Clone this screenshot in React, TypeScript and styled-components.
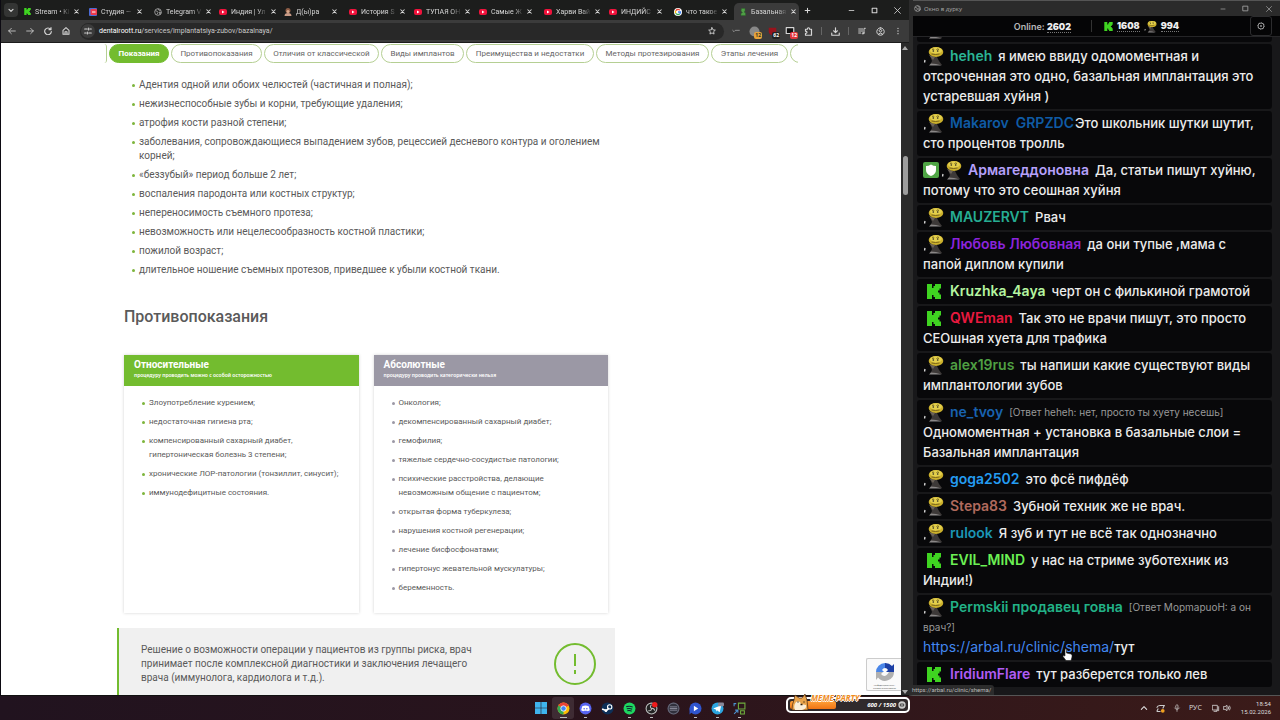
import React from "react";
import styled, { createGlobalStyle } from "styled-components";

const SITE = 'Roboto, "Noto Sans", sans-serif';
const UI = '"Open Sans", "Noto Sans", sans-serif';
const CHAT = 'Inter, "Liberation Sans", sans-serif';
const GREEN = "#73bc2f";

const Global = createGlobalStyle`
  *, *::before, *::after { box-sizing: border-box; }
  html, body { margin: 0; background: #1a1010; }
  button { font: inherit; color: inherit; border: 0; padding: 0; margin: 0; background: none; }
  ul, ol { list-style: none; margin: 0; padding: 0; }
  h2, h3, p { margin: 0; font-weight: 400; }
  svg { display: block; flex: none; }
`;

const Desktop = styled.div`
  height: 100vh;
  display: grid;
  grid-template-rows: minmax(0, 1fr) 24px;
  overflow: hidden;
`;
const Windows = styled.div`
  display: grid;
  grid-template-columns: minmax(0, 1fr) 371px;
  min-height: 0;
`;

/* Browser */
const Browser = styled.section`
  display: flex;
  flex-direction: column;
  min-width: 0;
  min-height: 0;
  background: #1c1d1c;
  border-left: 1px solid #0c0a12;
  border-bottom: 1px solid #111;
  font-family: ${UI};
  color: #d6d6d6;
`;
const TabStrip = styled.div`
  display: flex;
  align-items: flex-end;
  height: 20px;
  padding-left: 3px;
`;
const TabSearch = styled.button`
  width: 14px;
  height: 14px;
  margin: 0 1px 3px 0;
  border-radius: 4px;
  background: #343534;
  display: grid;
  place-items: center;
`;
const Tab = styled.div<{ $active?: boolean }>`
  display: flex;
  align-items: center;
  gap: 4px;
  width: 65px;
  height: 17px;
  padding: 0 6px 0 5px;
  border-radius: 5px 5px 0 0;
  background: ${(p) => (p.$active ? "#3b3b3b" : "transparent")};
  font: 7px/10px ${SITE};
`;
const TabTitle = styled.span`
  flex: 1;
  white-space: nowrap;
  mask-image: linear-gradient(90deg, #000 75%, rgba(0, 0, 0, 0.15));
`;
const StripButton = styled.button`
  width: 23px;
  height: 20px;
  display: grid;
  place-items: center;
`;
const NewTab = styled(StripButton)`
  width: 16px;
`;
const WindowControls = styled.div`
  display: flex;
  margin-left: auto;
`;
const Toolbar = styled.div`
  display: flex;
  align-items: center;
  height: 23px;
  padding: 0 2px;
  background: #3b3b3b;
  border-bottom: 1px solid #1c1c1c;
`;
const ToolButton = styled.button`
  position: relative;
  width: 18px;
  height: 18px;
  display: grid;
  place-items: center;
`;
const Address = styled.label`
  display: flex;
  align-items: center;
  flex: 1;
  height: 17px;
  margin: 0 3px 0 5px;
  padding: 0 8px 0 1px;
  gap: 4px;
  border-radius: 9px;
  background: #282828;
`;
const SiteInfo = styled.span`
  width: 14px;
  height: 14px;
  border-radius: 7px;
  background: #3b3b3b;
  display: grid;
  place-items: center;
`;
const Url = styled.span`
  flex: 1;
  font: 7px/12px ${SITE};
  color: #c8c8c8;
  b { font-weight: 400; color: #fff; }
`;
const Counter = styled.span<{ $bg: string; $fg: string }>`
  position: absolute;
  right: 1px;
  bottom: 1px;
  padding: 0 1px;
  border-radius: 2px;
  background: ${(p) => p.$bg};
  color: ${(p) => p.$fg};
  font: 700 5px/7px ${UI};
`;
const Divider = styled.i`
  width: 1px;
  height: 8px;
  margin: 0 4px;
  background: #666;
`;

/* Site */
const Viewport = styled.div`
  position: relative;
  flex: 1;
  min-height: 0;
  display: grid;
  grid-template-columns: minmax(0, 1fr) 8px;
`;
const Page = styled.main`
  background: #fff;
  overflow: hidden;
  font-family: ${SITE};
  color: #5a5a5a;
`;
const Scrollbar = styled.div`
  display: flex;
  flex-direction: column;
  align-items: center;
  justify-content: space-between;
  padding: 3px 0 1px;
  background: #2b2b2b;
`;
const Thumb = styled.i`
  width: 5px;
  height: 39px;
  margin: 106px 0 auto;
  border-radius: 3px;
  background: #9d9d9d;
`;
const Anchors = styled.nav`
  display: flex;
  gap: 2px;
  width: 694px;
  margin-left: 103px;
  padding: 1px 0 0;
  overflow: hidden;
`;
const Anchor = styled.a<{ $active?: boolean; $w: number }>`
  flex: 0 0 ${(p) => p.$w}px;
  height: 19px;
  border: 1px solid ${(p) => (p.$active ? GREEN : "#b5cf93")};
  border-radius: 10px;
  background: ${(p) => (p.$active ? GREEN : "#fff")};
  color: ${(p) => (p.$active ? "#fff" : "#666")};
  font-size: 8px;
  font-weight: ${(p) => (p.$active ? 700 : 400)};
  line-height: 17px;
  text-align: center;
  text-decoration: none;
  white-space: nowrap;
`;
const StubStart = styled.i`
  flex: 0 0 3px;
  height: 19px;
  border-right: 1px solid #b5cf93;
  border-radius: 0 8px 8px 0;
`;
const Article = styled.article`
  width: 498px;
  margin: 15px 0 0 116px;
`;
const Bullets = styled.ul<{ $dot: string; $size: number }>`
  display: grid;
  gap: 5px;
  font-size: ${(p) => p.$size}px;
  line-height: 14px;
  li { position: relative; }
  li::before {
    content: "";
    position: absolute;
    left: -7px;
    top: 6px;
    width: 3px;
    height: 3px;
    border-radius: 2px;
    background: ${(p) => p.$dot};
  }
`;
const Indications = styled.div`
  padding: 0 10px 0 22px;
`;
const Heading = styled.h2`
  margin: 29px 7px 27px;
  font-size: 16px;
  font-weight: 500;
  line-height: 22px;
`;
const Cards = styled.div`
  display: grid;
  grid-template-columns: 1fr 1fr;
  gap: 15px;
  margin: 0 7px;
`;
const Card = styled.section`
  padding-bottom: 18px;
  box-shadow: 0 0 3px rgba(0, 0, 0, 0.18);
`;
const CardHead = styled.header<{ $bg: string }>`
  height: 31px;
  padding: 4px 10px;
  margin-bottom: 10px;
  background: ${(p) => p.$bg};
  color: #fff;
  h3 { font-size: 10px; font-weight: 700; line-height: 12px; }
  p { font: 5px/9px "Noto Sans", sans-serif; font-weight: 600; }
`;
const CardBody = styled.div`
  padding: 0 12px 0 25px;
`;
const Notice = styled.aside`
  display: flex;
  align-items: center;
  justify-content: space-between;
  margin-top: 15px;
  padding: 15px 19px 13px 22px;
  border-left: 2px solid ${GREEN};
  background: #f0f0f0;
  font-size: 10px;
  line-height: 14px;
  p { width: 350px; }
`;
const Captcha = styled.div`
  position: absolute;
  right: 8px;
  bottom: 4px;
  width: 35px;
  height: 33px;
  padding: 3px 2px 0 3px;
  border: 1px solid #ccc;
  border-right: 0;
  border-radius: 2px 0 0 2px;
  background: #fafafa;
  font: 2px/3px ${SITE};
  color: #555;
  text-align: center;
  svg { margin: 0 auto 2px; }
`;

/* Chat */
const Chat = styled.section`
  position: relative;
  display: flex;
  flex-direction: column;
  min-width: 0;
  min-height: 0;
  border-left: 4px solid #2b2b2b;
  border-bottom: 1px solid #555;
  background: #18181a;
  font-family: ${CHAT};
`;
const ChatTitle = styled.header`
  display: flex;
  align-items: center;
  gap: 3px;
  height: 16px;
  padding-left: 1px;
  border-top: 1px solid #555;
  background: #2b2b2b;
  color: #a8a8a8;
  font: 6px/12px ${UI};
`;
const Stats = styled.div`
  display: grid;
  grid-template-columns: 1fr auto 1fr;
  align-items: center;
  height: 21px;
  padding: 0 8px;
  background: #050506;
  border-bottom: 1px solid #252527;
  color: #b8b8b8;
  font-size: 9px;
  font-weight: 600;
  line-height: 11px;
`;
const StatRow = styled.div`
  display: flex;
  align-items: center;
  gap: 4px;
  b { color: #eee; border-bottom: 1px dotted #777; }
`;
const StatDivider = styled.i`
  width: 1px;
  height: 12px;
  margin: 0 8px 0 16px;
  background: #333;
`;
const Gear = styled.button`
  justify-self: end;
  width: 22px;
  height: 20px;
  border: 1px solid #2c2c2e;
  border-radius: 3px;
  display: grid;
  place-items: center;
  color: #999;
`;
const Feed = styled.ol`
  && { padding: 0 8px 8px 4px; }
  flex: 1;
  min-height: 0;
  overflow: hidden;
  display: flex;
  flex-direction: column;
  justify-content: flex-end;
  gap: 2px;
`;
const Message = styled.li`
  flex: none;
  padding: 2px 5px 3px 6px;
  border-radius: 3px;
  background: #08080a;
  color: #ececec;
  font-size: 13px;
  font-weight: 500;
  line-height: 20px;
`;
const Author = styled.b<{ $c: string; $tight?: boolean }>`
  margin-right: ${(p) => (p.$tight ? 1 : 6)}px;
  font-size: 14px;
  font-weight: 600;
  white-space: pre;
  vertical-align: top;
  color: ${(p) => p.$c};
`;
const Reply = styled.small`
  font-size: 10px;
  font-weight: 400;
  vertical-align: top;
  color: #999;
`;
const MessageLink = styled.a`
  color: #4287f0;
  font-size: 14px;
  font-weight: 400;
  vertical-align: top;
  text-decoration: none;
`;
const Badge = styled.span<{ $gap: number }>`
  display: inline-block;
  height: 20px;
  margin-right: ${(p) => p.$gap}px;
  vertical-align: top;
`;
const StatusUrl = styled.div`
  position: absolute;
  left: -4px;
  bottom: 0;
  padding: 0 3px;
  border-radius: 0 3px 0 0;
  background: #2c2c2c;
  color: #bbb;
  font: 6px/10px ${SITE};
`;
const Pointer = styled.svg`
  position: absolute;
  left: 149px;
  bottom: 34px;
`;

/* Taskbar */
const Taskbar = styled.footer`
  position: relative;
  display: grid;
  grid-template-columns: 1fr auto 1fr;
  align-items: center;
  background: linear-gradient(90deg, #21131f 0%, #2a141c 50%, #3b1b19 100%);
  color: #ddd;
  font: 7px/8px ${UI};
`;
const Apps = styled.div`
  grid-column: 2;
  display: flex;
`;
const AppButton = styled.button<{ $run?: boolean; $active?: boolean }>`
  width: 22px;
  height: 22px;
  display: grid;
  place-items: center;
  border-radius: 3px;
  background: ${(p) => (p.$active ? "rgba(255,255,255,.1)" : "none")};
  position: relative;
  &::after {
    content: "";
    position: absolute;
    bottom: 1px;
    width: ${(p) => (p.$active ? 7 : 3)}px;
    height: 1px;
    background: ${(p) => (p.$run || p.$active ? "#bbb" : "transparent")};
  }
`;
const Tray = styled.div`
  display: flex;
  align-items: center;
  justify-content: flex-end;
  gap: 8px;
  padding-right: 9px;
`;
const Network = styled.span`
  display: flex;
  gap: 3px;
  margin-left: 2px;
  margin-right: 2px;
`;
const Clock = styled.time`
  font: 6px/8px ${SITE};
  text-align: right;
`;
const Party = styled.div`
  position: absolute;
  right: 370px;
  top: 1px;
  width: 124px;
  height: 16px;
  padding: 2px;
  border: 2px solid #fff;
  border-radius: 5px;
  background: #302a2c;
`;
const PartyFill = styled.i`
  display: block;
  width: 46px;
  height: 8px;
  border-radius: 2px;
  background: linear-gradient(#ffa23a, #ef7414);
`;
const PartyName = styled.span`
  position: absolute;
  left: 23px;
  top: -6px;
  color: #f08c1e;
  font: italic 700 8px/10px ${UI};
  text-shadow: 1px 0 #fff, -1px 0 #fff, 0 1px #fff, 0 -1px #fff;
  white-space: nowrap;
`;
const PartyScore = styled.span`
  position: absolute;
  right: 2px;
  top: 1px;
  display: flex;
  align-items: center;
  gap: 2px;
  color: #fff;
  font: italic 700 6px/10px ${UI};
`;
const Doge = styled.svg`
  position: absolute;
  left: 3px;
  top: -6px;
`;

type IconProps = { d: string; size?: number; w?: number; fill?: string };
const Line = ({ d, size = 9, w = 1.4, fill = "none" }: IconProps) => (
  <svg width={size} height={size} viewBox="0 0 12 12" fill={fill} stroke="currentColor" strokeWidth={w} strokeLinecap="round" strokeLinejoin="round">
    <path d={d} />
  </svg>
);

const Kick = ({ size }: { size: number }) => (
  <svg width={size} height={size} viewBox="0 0 14 15">
    <path fill="#3fd421" d="M0 0h5v4h1.500V2H8V0h6v4.500h-1.500v2H11v2h1.500v2H14V15H8v-2H6.500v-2H5v4H0z" />
  </svg>
);
const KickBadge = () => (
  <svg width="21" height="20" viewBox="0 0 21 20">
    <path transform="translate(4 3)" fill="#3fd421" d="M0 0h5v4h1.500V2H8V0h6v4.500h-1.500v2H11v2h1.500v2H14V15H8v-2H6.500v-2H5v4H0z" />
  </svg>
);
const Face = ({ size = 21 }: { size?: number }) => (
  <svg width={size} height={size === 21 ? 20 : size} viewBox="0 0 21 20">
    <path d="M2 14l-.5 2.500" stroke="#ddd" strokeWidth="1.300" />
    <path d="M7 10l7 1 2 4 3 4H7l2-4z" fill="#3d3938" />
    <path d="M6 9l4 5 2-3z" fill="#6b6258" />
    <path d="M8 17.500l5 .5 6 1.500H6z" fill="#8a8787" />
    <ellipse cx="13" cy="6" rx="7.300" ry="5" fill="#cbb02c" />
    <ellipse cx="13" cy="4.500" rx="6" ry="3.200" fill="#e3cf4c" />
    <path d="M9 3.500q1-1 2.200 0M13.500 3.500q1-1 2.500 0" stroke="#554812" strokeWidth=".8" fill="none" />
    <circle cx="10.300" cy="5" r=".8" fill="#222" />
    <circle cx="14.700" cy="5" r=".8" fill="#222" />
    <path d="M8.500 8q4 1 8 0" stroke="#7a651a" fill="none" />
  </svg>
);
const Shield = () => (
  <svg width="17" height="20" viewBox="0 0 17 20">
    <rect y="2" width="16" height="16" rx="2" fill="#4fa545" />
    <path d="M8 4.500q2.500 1.500 5 1.500v4q0 4-5 6-5-2-5-6V6q2.500 0 5-1.500z" fill="#fff" />
  </svg>
);
const Globe = ({ size = 8 }: { size?: number }) => (
  <svg width={size} height={size} viewBox="0 0 12 12">
    <circle cx="6" cy="6" r="5" fill="none" stroke="#999" strokeWidth="1.400" />
    <path d="M2 4l3 1 1 2-2 3M6 1l1 2 3 1M8 6l3 1-2 3z" stroke="#999" strokeWidth="1.400" fill="none" />
  </svg>
);

const Favicon = ({ kind }: { kind: string }) => {
  if (kind === "kick") return <Kick size={7} />;
  if (kind === "globe") return <Globe />;
  return (
    <svg width="8" height="8" viewBox="0 0 16 16">
      {kind === "yt" && (<><rect y="2" width="16" height="12" rx="4" fill="#f0123c" /><path d="M6 5l5 3-5 3z" fill="#fff" /></>)}
      {kind === "studio" && (<><rect width="16" height="16" rx="2" fill="#4b6bd6" /><rect x="3" y="2" width="13" height="12" rx="2" fill="#ee3a4d" /><path d="M6 8h7" stroke="#fff" strokeWidth="2" /></>)}
      {kind === "face" && (<><circle cx="8" cy="5" r="5" fill="#8d5d46" /><circle cx="8" cy="7" r="3" fill="#d9a88a" /><path d="M1 16q0-6 7-6t7 6z" fill="#c99b86" /></>)}
      {kind === "google" && (<><circle cx="8" cy="8" r="8" fill="#fff" /><g fill="none" strokeWidth="2.600"><path d="M3.500 5.500A5 5 0 0 1 11.500 4.500" stroke="#ea4335" /><path d="M3.500 5.500a5 5 0 0 0 0 5" stroke="#fbbc05" /><path d="M3.500 10.500a5 5 0 0 0 8 1" stroke="#34a853" /><path d="M8 8h5a5 5 0 0 1-1.500 3.500" stroke="#4285f4" /></g></>)}
      {kind === "tooth" && <path d="M5 1h7v5l-2 2 3 2v5H4v-4l3-2-3-3z" fill="#4f9d46" stroke="#2c6b2a" />}
    </svg>
  );
};

const tabs: [string, string][] = [
  ["kick", "Stream • Ki"], ["studio", "Студия —"], ["globe", "Telegram V"], ["yt", "Индия | Ул"],
  ["face", "Д(ы)ра"], ["yt", "История S"], ["yt", "ТУПАЯ ОН"], ["yt", "Самые Ж"],
  ["yt", "Харви Вай"], ["yt", "ИНДИЙС"], ["google", "что такое"], ["tooth", "Базальная"],
];
const anchors: [string, number][] = [
  ["Показания", 60], ["Противопоказания", 91], ["Отличия от классической", 115], ["Виды имплантов", 83],
  ["Преимущества и недостатки", 128], ["Методы протезирования", 113], ["Этапы лечения", 77], ["", 60],
];
const indications = [
  "Адентия одной или обоих челюстей (частичная и полная);",
  "нежизнеспособные зубы и корни, требующие удаления;",
  "атрофия кости разной степени;",
  "заболевания, сопровождающиеся выпадением зубов, рецессией десневого контура и оголением корней;",
  "«беззубый» период больше 2 лет;",
  "воспаления пародонта или костных структур;",
  "непереносимость съемного протеза;",
  "невозможность или нецелесообразность костной пластики;",
  "пожилой возраст;",
  "длительное ношение съемных протезов, приведшее к убыли костной ткани.",
];
const cards = [
  {
    title: "Относительные", note: "процедуру проводить можно с особой осторожностью", bg: GREEN, dot: "#7db53c",
    items: ["Злоупотребление курением;", "недостаточная гигиена рта;", "компенсированный сахарный диабет, гипертоническая болезнь 3 степени;", "хронические ЛОР-патологии (тонзиллит, синусит);", "иммунодефицитные состояния."],
  },
  {
    title: "Абсолютные", note: "процедуру проводить категорически нельзя", bg: "#9b98a5", dot: "#9b98a5",
    items: ["Онкология;", "декомпенсированный сахарный диабет;", "гемофилия;", "тяжелые сердечно-сосудистые патологии;", "психические расстройства, делающие невозможным общение с пациентом;", "открытая форма туберкулеза;", "нарушения костной регенерации;", "лечение бисфосфонатами;", "гипертонус жевательной мускулатуры;", "беременность."],
  },
];
type Msg = { who: string; c: string; text: string; kick?: boolean; shield?: boolean; tight?: boolean; reply?: string; link?: string };
const messages: Msg[] = [
  { who: "", c: "#999", text: "" },
  { who: "heheh", c: "#2bb596", text: "я имею ввиду одомоментная и отсроченная это одно, базальная имплантация это устаревшая хуйня )" },
  { who: "Makarov  GRPZDC", c: "#0f5ba5", tight: true, text: "Это школьник шутки шутит, сто процентов тролль" },
  { who: "Армагеддоновна", c: "#b5a0fb", shield: true, text: "Да, статьи пишут хуйню, потому что это сеошная хуйня" },
  { who: "MAUZERVT", c: "#26ad93", text: "Рвач" },
  { who: "Любовь Любовная", c: "#8b24dc", text: "да они тупые ,мама с папой диплом купили" },
  { who: "Kruzhka_4aya", c: "#b5f5a0", kick: true, text: "черт он с филькиной грамотой" },
  { who: "QWEman", c: "#e9193f", kick: true, text: "Так это не врачи пишут, это просто СЕОшная хуета для трафика" },
  { who: "alex19rus", c: "#4f9f43", text: "ты напиши какие существуют виды имплантологии зубов" },
  { who: "ne_tvoy", c: "#1862b0", reply: "[Ответ heheh: нет, просто ты хуету несешь]", text: "Одномоментная + установка в базальные слои = Базальная имплантация" },
  { who: "goga2502", c: "#249cf2", text: "это фсё пифдёф" },
  { who: "Stepa83", c: "#b06a5d", text: "Зубной техник же не врач." },
  { who: "rulook", c: "#1b95b5", text: "Я зуб и тут не всё так однозначно" },
  { who: "EVIL_MIND", c: "#6cf054", kick: true, text: "у нас на стриме зуботехник из Индии!)" },
  { who: "Permskii продавец говна", c: "#22b287", reply: "[Ответ МоpmapuоH: а он врач?]", link: "https://arbal.ru/clinic/shema/", text: "тут" },
  { who: "IridiumFlare", c: "#b05cf5", kick: true, text: "тут разберется только лев" },
];

const Disc = ({ c, size = 13, children }: { c: string; size?: number; children?: React.ReactNode }) => (
  <svg width={size} height={size} viewBox="0 0 24 24">
    <circle cx="12" cy="12" r="11" fill={c} />
    {children}
  </svg>
);

export default function App() {
  return (
    <>
      <Global />
      <Desktop>
        <Windows>
          <Browser>
            <TabStrip>
              <TabSearch aria-label="Поиск вкладок"><Line d="M3 5l3 3 3-3" size={8} w={1.8} /></TabSearch>
              {tabs.map(([kind, title], i) => (
                <Tab key={i} $active={i === tabs.length - 1}>
                  <Favicon kind={kind} />
                  <TabTitle>{title}</TabTitle>
                  <Line d="M3 3l6 6M9 3l-6 6" size={7} w={1.8} />
                </Tab>
              ))}
              <NewTab aria-label="Новая вкладка"><Line d="M6 2v8M2 6h8" size={7} w={1.8} /></NewTab>
              <WindowControls>
                <StripButton aria-label="Свернуть"><Line d="M2 6h8" size={7} /></StripButton>
                <StripButton aria-label="Развернуть"><Line d="M2 2h8v8H2z" size={7} w={1.8} /></StripButton>
                <StripButton aria-label="Закрыть"><Line d="M1 1l10 10M11 1L1 11" size={7} /></StripButton>
              </WindowControls>
            </TabStrip>
            <Toolbar>
              <ToolButton aria-label="Назад"><Line d="M11 6H1M5 2L1 6l4 4" size={8} w={1.2} /></ToolButton>
              <ToolButton aria-label="Вперёд"><Line d="M1 6h10M7 2l4 4-4 4" size={8} w={1.2} /></ToolButton>
              <ToolButton aria-label="Обновить"><Line d="M10 3.500A5 5 0 1 0 11 7M10.500 1v3h-3" size={8} w={1.7} /></ToolButton>
              <ToolButton aria-label="Домой"><Line d="M1.500 5L6 1l4.500 4v6h-9zM4.500 11V7h3v4" size={8} w={1.6} /></ToolButton>
              <Address>
                <SiteInfo><Line d="M1 3h4M9 3h2M7 1.500v3M1 9h2M7 9h4M5 7.500v3" size={8} w={1.6} /></SiteInfo>
                <Url><b>dentalroott.ru</b>/services/implantatsiya-zubov/bazalnaya/</Url>
                <Line d="M6 1l1.500 3.300 3.500.4-2.600 2.400.7 3.500L6 8.900l-3.100 1.700.7-3.500L1 4.700l3.500-.4z" size={8} w={1.3} />
              </Address>
              <ToolButton aria-label="Расширение"><Line d="M1 5l2 2 2-2h6" size={8} w={0.8} /></ToolButton>
              <ToolButton aria-label="Кошелёк"><Disc c="#888" size={11} /><Counter $bg="#e8a43a" $fg="#332">12</Counter></ToolButton>
              <ToolButton aria-label="Блокировщик">
                <svg width="9" height="9" viewBox="0 0 12 12"><path d="M1 1h10v5q0 4-5 5Q1 10 1 6z" fill="#98131c" /></svg>
                <Counter $bg="#222" $fg="#fff">62</Counter>
              </ToolButton>
              <ToolButton aria-label="Вкладки"><Line d="M1.500 2h9v7h-9z" size={10} fill="#111" /><Counter $bg="#e3363c" $fg="#fff">12</Counter></ToolButton>
              <ToolButton aria-label="Расширения"><Line d="M2 3h2.500q0-2 1.500-2t1.500 2H10v8H2V8.500q2 0 2-1.500T2 5.500z" size={9} w={1.6} /></ToolButton>
              <Divider />
              <ToolButton aria-label="Загрузки"><Line d="M6 1v6M3.500 5L6 7.500 8.500 5M1 8v3h10V8" size={9} w={1.5} /></ToolButton>
              <Divider />
              <ToolButton aria-label="Медиа"><Line d="M1 3h6M1 6h6M1 9h3M9 9V2h2M9 9q0 1.500-1.500 1.500T6 9.500 9 9" size={8} /></ToolButton>
              <ToolButton aria-label="Профиль"><Line d="M6 1a5 5 0 1 0 .01 0M6 3a1.800 1.800 0 1 0 .01 0M3 9.500q3-3 6 0" size={9} w={1.3} /></ToolButton>
              <ToolButton aria-label="Меню"><Line d="M6 2v.01M6 6v.01M6 10v.01" size={8} w={2} /></ToolButton>
            </Toolbar>
            <Viewport>
              <Page>
                <Anchors>
                  <StubStart />
                  {anchors.map(([t, w], i) => (
                    <Anchor key={i} href="#section" $w={w} $active={i === 0}>{t}</Anchor>
                  ))}
                </Anchors>
                <Article>
                  <Indications>
                    <Bullets $dot="#7db53c" $size={10}>
                      {indications.map((t) => <li key={t}>{t}</li>)}
                    </Bullets>
                  </Indications>
                  <Heading>Противопоказания</Heading>
                  <Cards>
                    {cards.map((c) => (
                      <Card key={c.title}>
                        <CardHead $bg={c.bg}><h3>{c.title}</h3><p>{c.note}</p></CardHead>
                        <CardBody>
                          <Bullets $dot={c.dot} $size={8}>{c.items.map((t) => <li key={t}>{t}</li>)}</Bullets>
                        </CardBody>
                      </Card>
                    ))}
                  </Cards>
                  <Notice>
                    <p>Решение о возможности операции у пациентов из группы риска, врач принимает после комплексной диагностики и заключения лечащего врача (иммунолога, кардиолога и т.д.).</p>
                    <svg width="42" height="42" viewBox="0 0 42 42" fill="none" stroke={GREEN} strokeWidth="2">
                      <circle cx="21" cy="21" r="20" />
                      <path d="M21 11v12M21 27v4" />
                    </svg>
                  </Notice>
                </Article>
              </Page>
              <Scrollbar>
                <svg width="6" height="4" viewBox="0 0 6 4"><path d="M3 0l3 4H0z" fill="#aaa" /></svg>
                <Thumb />
                <svg width="6" height="4" viewBox="0 0 6 4"><path d="M3 4l3-4H0z" fill="#aaa" /></svg>
              </Scrollbar>
              <Captcha>
                <svg width="20" height="20" viewBox="0 0 20 20">
                  <path d="M1 10A9 9 0 0 1 10 1v5a4 4 0 0 0-3 2l2 2z" fill="#4a86e8" />
                  <path d="M10 1a9 9 0 0 1 7 3l2-2v8h-8l2-2a4 4 0 0 0-3-2z" fill="#1c3fa5" />
                  <path d="M19 10A9 9 0 0 1 3 15.500L1 18v-8h7L6 12q4 5 8-2z" fill="#b0b0b0" />
                </svg>
                Конфиденциальность - Условия использования
              </Captcha>
            </Viewport>
          </Browser>

          <Chat>
            <ChatTitle>
              <Globe size={7} /> Окно в дурку
              <WindowControls>
                <StripButton aria-label="Свернуть"><Line d="M2 6h8" size={6} /></StripButton>
                <StripButton aria-label="Развернуть"><Line d="M2 2h8v8H2z" size={7} /></StripButton>
                <StripButton aria-label="Закрыть"><Line d="M1 1l10 10M11 1L1 11" size={6} /></StripButton>
              </WindowControls>
            </ChatTitle>
            <Stats>
              <span />
              <StatRow>
                <span>Online: <b>2602</b></span>
                <StatDivider />
                <Kick size={9} /><b>1608</b>
                <Face size={13} /><b>994</b>
              </StatRow>
              <Gear aria-label="Настройки">
                <svg width="8" height="8" viewBox="0 0 12 12" fill="none" stroke="currentColor">
                  <circle cx="6" cy="6" r="4.500" strokeWidth="1.500" />
                  <circle cx="6" cy="6" r="1" fill="currentColor" />
                  <circle cx="6" cy="6" r="5.300" strokeDasharray="1.500 2.600" />
                </svg>
              </Gear>
            </Stats>
            <Feed>
              {messages.map((m) => (
                <Message key={m.who}>
                  {m.shield && <Badge $gap={1}><Shield /></Badge>}
                  <Badge $gap={6}>{m.kick ? <KickBadge /> : <Face />}</Badge>
                  <Author $c={m.c} $tight={m.tight}>{m.who}</Author>
                  {m.reply && <><Reply>{m.reply}</Reply><br /></>}
                  {m.link && <MessageLink href={m.link}>{m.link}</MessageLink>}
                  {m.text}
                </Message>
              ))}
            </Feed>
            <StatusUrl>https://arbal.ru/clinic/shema/</StatusUrl>
            <Pointer width="11" height="13" viewBox="0 0 11 13">
              <path d="M3 1q1.500-1 1.500 1v3l4.500 1q1.500.500 1 3l-1 3.500H4L1 8.500q0-1.500 2-.5z" fill="#fff" stroke="#222" strokeWidth=".6" />
            </Pointer>
          </Chat>
        </Windows>

        <Taskbar>
          <Apps>
            <AppButton aria-label="Пуск"><svg width="12" height="12" viewBox="0 0 12 12" fill="#3fb4ee"><path d="M0 0h5.700v5.700H0zM6.300 0H12v5.700H6.300zM0 6.300h5.700V12H0zM6.300 6.300H12V12H6.300z" /></svg></AppButton>
            <AppButton aria-label="Chrome" $active>
              <svg width="13" height="13" viewBox="0 0 24 24">
                <circle cx="12" cy="12" r="11" fill="#fbbc05" />
                <path d="M12 12L2.500 6.500a11 11 0 0 1 19 0z" fill="#ea4335" />
                <path d="M12 12L12 23A11 11 0 0 1 2.500 6.500z" fill="#34a853" />
                <circle cx="12" cy="12" r="5" fill="#4285f4" stroke="#fff" strokeWidth="1.500" />
              </svg>
            </AppButton>
            <AppButton aria-label="Discord" $run><Disc c="#5865f2"><path d="M6 8q6-3 12 0l2 7-4 2-1-1H9l-1 1-4-2z" fill="#fff" /><circle cx="9.500" cy="12.500" r="1.500" fill="#5865f2" /><circle cx="14.500" cy="12.500" r="1.500" fill="#5865f2" /></Disc></AppButton>
            <AppButton aria-label="Steam"><Disc c="#0d2f57"><path d="M2 13l8 3 5-5" stroke="#fff" strokeWidth="3" fill="none" /><circle cx="16" cy="9" r="4" fill="none" stroke="#fff" strokeWidth="2" /><circle cx="9" cy="16" r="2.500" fill="#fff" /></Disc></AppButton>
            <AppButton aria-label="Spotify" $run><Disc c="#1ed760"><path d="M6 8.500q7-2 12 1M7 12.500q6-1.500 10 1M8 16q5-1 8 1" stroke="#123" strokeWidth="2" fill="none" /></Disc></AppButton>
            <AppButton aria-label="OBS" $run><Disc c="#222"><circle cx="12" cy="12" r="10" fill="none" stroke="#bbb" strokeWidth="2" /><path d="M12 12q-4-3 0-7M12 12q5-1 6 4M12 12q0 5-6 4" stroke="#bbb" strokeWidth="2" fill="none" /><circle cx="18" cy="5" r="5" fill="#ee1c1c" /></Disc></AppButton>
            <AppButton aria-label="Плеер"><Disc c="#30303c"><circle cx="12" cy="12" r="10" fill="none" stroke="#667" strokeWidth="2" /><path d="M5 9h14M5 12h14M5 15h14" stroke="#99a" strokeWidth="1.500" /></Disc></AppButton>
            <AppButton aria-label="Стрим-чат" $run><Disc c="#2f55cf"><path d="M1 23V12h11z" fill="#2f55cf" /><path d="M9 7l8 5-8 5z" fill="#fff" /></Disc></AppButton>
            <AppButton aria-label="Telegram" $run><Disc c="#2ca5e0"><path d="M4 12l15-6-3 13-5-4-1 3-1-4z" fill="#fff" /><rect x="13" y="1" width="11" height="7" rx="2" fill="#889" /></Disc></AppButton>
            <AppButton aria-label="Захват" $run>
              <svg width="13" height="13" viewBox="0 0 24 24" fill="none" strokeWidth="2"><path d="M10 2h12v11H10z" stroke="#6fae3e" /><path d="M14 16h7v6h-7z" stroke="#6fae3e" /><path d="M2 8v-5h4M2 22l7-7M4 15h5v5" stroke="#4c93d0" /></svg>
            </AppButton>
          </Apps>
          <Tray>
            <Line d="M2 8l4-4 4 4" size={8} w={1.6} />
            <svg width="9" height="9" viewBox="0 0 12 12" fill="none" stroke="#ccc"><path d="M1 5q1-3 4-3h6l-2 4M1 10h5M1 10l2-4" strokeWidth="1.400" /><circle cx="9" cy="9" r="2.500" fill="#f0a020" stroke="none" /></svg>
            <Line d="M4.500 2q1.500-2 3 0v4q-1.500 2-3 0zM2.500 6q3.500 5 7 0M6 9v2" size={8} w={1} />
            <span>РУС</span>
            <Network>
              <Line d="M1 2h7v7H1zM10 4v6H7M3 11h4" size={8} w={1.2} />
              <Line d="M1 4h2l3-2v8L3 8H1zM8 4q1.500 2 0 4M10 3q2 3 0 6" size={8} w={1.2} />
            </Network>
            <Clock>18:54<br />15.02.2026</Clock>
          </Tray>
          <Party>
            <PartyFill />
            <PartyName>MEME PARTY</PartyName>
            <PartyScore>600 / 1500 <Disc c="#ccc" size={8}><path d="M7 9h10v6H7z" fill="none" stroke="#444" strokeWidth="3" /></Disc></PartyScore>
            <Doge width="18" height="18" viewBox="0 0 18 18">
              <path d="M3 7l1-5 4 3h3l3-4 2 6 1 10H1q0-6 2-10z" fill="#e9a44c" stroke="#4a2a12" strokeWidth=".7" />
              <path d="M5 9q4-2 5 2l5 1q1 4-4 5H4q-2-4 1-8z" fill="#fbeed8" />
              <path d="M7 8.500v1M13 8.500v1M9.500 11.500h2" stroke="#321" strokeWidth="1.300" />
            </Doge>
          </Party>
        </Taskbar>
      </Desktop>
    </>
  );
}
